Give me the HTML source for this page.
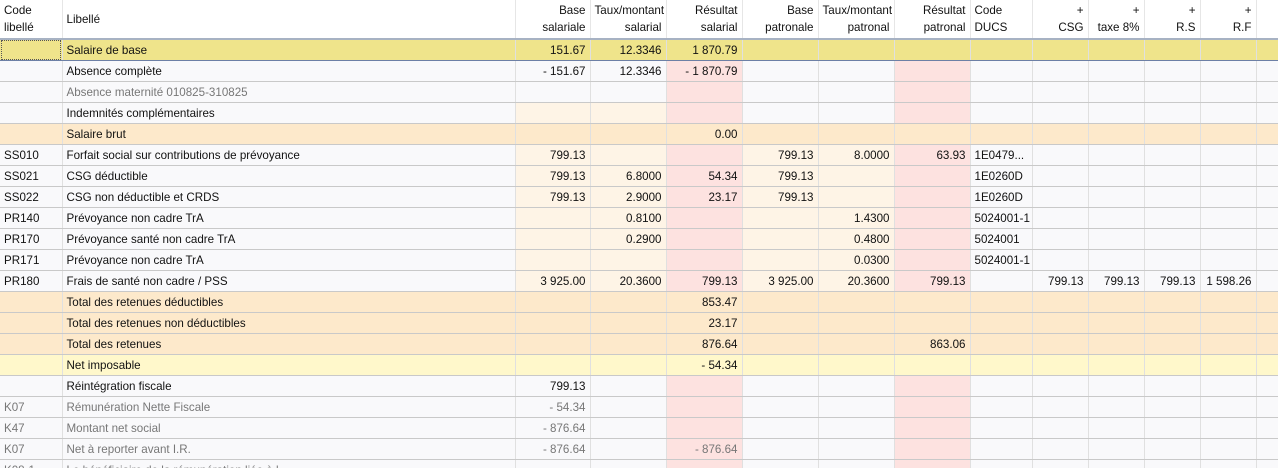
<!DOCTYPE html>
<html><head><meta charset="utf-8"><style>
html,body{margin:0;padding:0;background:#f9f9fb;width:1278px;height:468px;overflow:hidden}
table{border-collapse:collapse;table-layout:fixed;width:1278px;font-family:"Liberation Sans","DejaVu Sans",sans-serif;font-size:11.6px;color:#111}
td{height:19px;padding:1px 4px 0;border-bottom:1px solid #c9c9c9;border-left:1px solid #e0e0e0;white-space:nowrap;overflow:hidden;text-align:right;line-height:19px}
td:nth-child(1),td:nth-child(2),td:nth-child(9){text-align:left}
td:nth-child(1){border-left:none}
thead td{height:38px;padding-top:0;background:#fff;line-height:17px;vertical-align:middle;border-bottom:2px solid #a7b2c3;border-left:1px solid #e6e6e6}
tbody tr{background:#f9f9fb}
tr.y{background:#efe48b}
tr.y td{border-bottom:1px solid #6d80a6}
tr.y td:first-child{outline:1px dotted #555;outline-offset:-2px}
tr.p{background:#fde9cb}
tr.ly{background:#fff8cb}
tr.g td{color:#777}
td.l{background:#fef4e6}
td.k{background:#fde2e0}
</style></head><body>
<table>
<colgroup><col style="width:62px"><col style="width:453px"><col style="width:75px"><col style="width:76px"><col style="width:76px"><col style="width:76px"><col style="width:76px"><col style="width:76px"><col style="width:62px"><col style="width:56px"><col style="width:56px"><col style="width:56px"><col style="width:56px"><col style="width:22px"></colgroup>
<thead><tr><td>Code<br>libellé</td><td>Libellé</td><td>Base<br>salariale</td><td>Taux/montant<br>salarial</td><td>Résultat<br>salarial</td><td>Base<br>patronale</td><td>Taux/montant<br>patronal</td><td>Résultat<br>patronal</td><td>Code<br>DUCS</td><td>+<br>CSG</td><td>+<br>taxe 8%</td><td>+<br>R.S</td><td>+<br>R.F</td><td></td></tr></thead>
<tbody>
<tr class="y"><td></td><td>Salaire de base</td><td>151.67</td><td>12.3346</td><td>1 870.79</td><td></td><td></td><td></td><td></td><td></td><td></td><td></td><td></td><td></td></tr>
<tr><td></td><td>Absence complète</td><td>- 151.67</td><td>12.3346</td><td class="k">- 1 870.79</td><td></td><td></td><td class="k"></td><td></td><td></td><td></td><td></td><td></td><td></td></tr>
<tr class="g"><td></td><td>Absence maternité 010825-310825</td><td></td><td></td><td class="k"></td><td></td><td></td><td class="k"></td><td></td><td></td><td></td><td></td><td></td><td></td></tr>
<tr><td></td><td>Indemnités complémentaires</td><td class="l"></td><td class="l"></td><td class="k"></td><td></td><td></td><td class="k"></td><td></td><td></td><td></td><td></td><td></td><td></td></tr>
<tr class="p"><td></td><td>Salaire brut</td><td></td><td></td><td>0.00</td><td></td><td></td><td></td><td></td><td></td><td></td><td></td><td></td><td></td></tr>
<tr><td>SS010</td><td>Forfait social sur contributions de prévoyance</td><td class="l">799.13</td><td class="l"></td><td class="k"></td><td class="l">799.13</td><td class="l">8.0000</td><td class="k">63.93</td><td>1E0479...</td><td></td><td></td><td></td><td></td><td></td></tr>
<tr><td>SS021</td><td>CSG déductible</td><td class="l">799.13</td><td class="l">6.8000</td><td class="k">54.34</td><td class="l">799.13</td><td class="l"></td><td class="k"></td><td>1E0260D</td><td></td><td></td><td></td><td></td><td></td></tr>
<tr><td>SS022</td><td>CSG non déductible et CRDS</td><td class="l">799.13</td><td class="l">2.9000</td><td class="k">23.17</td><td class="l">799.13</td><td class="l"></td><td class="k"></td><td>1E0260D</td><td></td><td></td><td></td><td></td><td></td></tr>
<tr><td>PR140</td><td>Prévoyance non cadre TrA</td><td class="l"></td><td class="l">0.8100</td><td class="k"></td><td class="l"></td><td class="l">1.4300</td><td class="k"></td><td>5024001-1</td><td></td><td></td><td></td><td></td><td></td></tr>
<tr><td>PR170</td><td>Prévoyance santé non cadre TrA</td><td class="l"></td><td class="l">0.2900</td><td class="k"></td><td class="l"></td><td class="l">0.4800</td><td class="k"></td><td>5024001</td><td></td><td></td><td></td><td></td><td></td></tr>
<tr><td>PR171</td><td>Prévoyance non cadre TrA</td><td class="l"></td><td class="l"></td><td class="k"></td><td class="l"></td><td class="l">0.0300</td><td class="k"></td><td>5024001-1</td><td></td><td></td><td></td><td></td><td></td></tr>
<tr><td>PR180</td><td>Frais de santé non cadre / PSS</td><td class="l">3 925.00</td><td class="l">20.3600</td><td class="k">799.13</td><td class="l">3 925.00</td><td class="l">20.3600</td><td class="k">799.13</td><td></td><td>799.13</td><td>799.13</td><td>799.13</td><td>1 598.26</td><td></td></tr>
<tr class="p"><td></td><td>Total des retenues déductibles</td><td></td><td></td><td>853.47</td><td></td><td></td><td></td><td></td><td></td><td></td><td></td><td></td><td></td></tr>
<tr class="p"><td></td><td>Total des retenues non déductibles</td><td></td><td></td><td>23.17</td><td></td><td></td><td></td><td></td><td></td><td></td><td></td><td></td><td></td></tr>
<tr class="p"><td></td><td>Total des retenues</td><td></td><td></td><td>876.64</td><td></td><td></td><td>863.06</td><td></td><td></td><td></td><td></td><td></td><td></td></tr>
<tr class="ly"><td></td><td>Net imposable</td><td></td><td></td><td>- 54.34</td><td></td><td></td><td></td><td></td><td></td><td></td><td></td><td></td><td></td></tr>
<tr><td></td><td>Réintégration fiscale</td><td>799.13</td><td></td><td class="k"></td><td></td><td></td><td class="k"></td><td></td><td></td><td></td><td></td><td></td><td></td></tr>
<tr class="g"><td>K07</td><td>Rémunération Nette Fiscale</td><td>- 54.34</td><td></td><td class="k"></td><td></td><td></td><td class="k"></td><td></td><td></td><td></td><td></td><td></td><td></td></tr>
<tr class="g"><td>K47</td><td>Montant net social</td><td>- 876.64</td><td></td><td class="k"></td><td></td><td></td><td class="k"></td><td></td><td></td><td></td><td></td><td></td><td></td></tr>
<tr class="g"><td>K07</td><td>Net à reporter avant I.R.</td><td>- 876.64</td><td></td><td class="k">- 876.64</td><td></td><td></td><td class="k"></td><td></td><td></td><td></td><td></td><td></td><td></td></tr>
<tr class="g"><td>K08-1</td><td>Le bénéficiaire de la rémunération liée à l...</td><td></td><td></td><td class="k"></td><td></td><td></td><td class="k"></td><td></td><td></td><td></td><td></td><td></td><td></td></tr>
</tbody></table>
</body></html>
